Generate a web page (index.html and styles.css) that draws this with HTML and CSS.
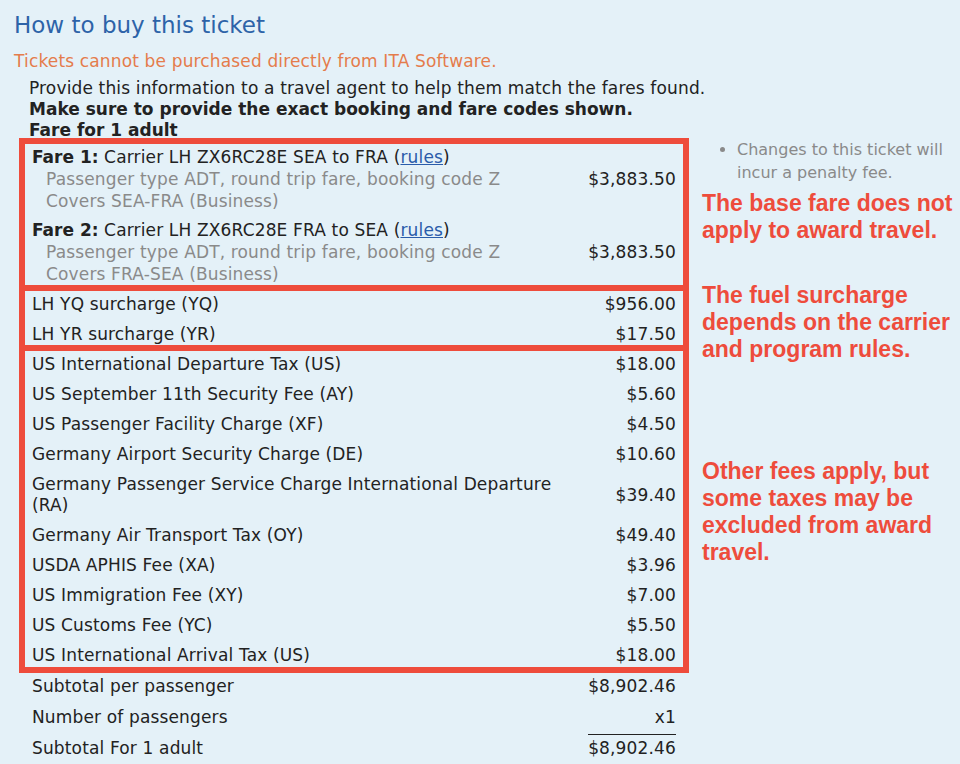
FILE: index.html
```html
<!DOCTYPE html>
<html lang="en">
<head>
    <meta charset="UTF-8">
    <meta name="viewport" content="width=device-width, initial-scale=1.0">
    <title>How to buy this ticket</title>
    <link rel="stylesheet" href="styles.css">
</head>
<body>
    <div class="page">
        <h1>How to buy this ticket</h1>
        <p class="notice">Tickets cannot be purchased directly from ITA Software.</p>
        <div class="intro">
            <p>Provide this information to a travel agent to help them match the fares found.</p>
            <p class="strong">Make sure to provide the exact booking and fare codes shown.</p>
            <p class="strong">Fare for 1 adult</p>
        </div>

        <div class="layout">
            <div class="fares">
                <div class="box box-fares">
                    <div class="fare">
                        <div class="fare-info">
                            <div><b>Fare 1:</b> Carrier LH ZX6RC28E SEA to FRA (<a href="#">rules</a>)</div>
                            <div class="sub">Passenger type ADT, round trip fare, booking code Z</div>
                            <div class="sub">Covers SEA-FRA (Business)</div>
                        </div>
                        <div class="amount">$3,883.50</div>
                    </div>
                    <div class="fare">
                        <div class="fare-info">
                            <div><b>Fare 2:</b> Carrier LH ZX6RC28E FRA to SEA (<a href="#">rules</a>)</div>
                            <div class="sub">Passenger type ADT, round trip fare, booking code Z</div>
                            <div class="sub">Covers FRA-SEA (Business)</div>
                        </div>
                        <div class="amount">$3,883.50</div>
                    </div>
                </div>

                <div class="box box-list">
                    <div class="row"><span class="label">LH YQ surcharge (YQ)</span><span class="amount">$956.00</span></div>
                    <div class="row"><span class="label">LH YR surcharge (YR)</span><span class="amount">$17.50</span></div>
                </div>

                <div class="box box-list box-last">
                    <div class="row"><span class="label">US International Departure Tax (US)</span><span class="amount">$18.00</span></div>
                    <div class="row"><span class="label">US September 11th Security Fee (AY)</span><span class="amount">$5.60</span></div>
                    <div class="row"><span class="label">US Passenger Facility Charge (XF)</span><span class="amount">$4.50</span></div>
                    <div class="row"><span class="label">Germany Airport Security Charge (DE)</span><span class="amount">$10.60</span></div>
                    <div class="row"><span class="label">Germany Passenger Service Charge International Departure (RA)</span><span class="amount">$39.40</span></div>
                    <div class="row"><span class="label">Germany Air Transport Tax (OY)</span><span class="amount">$49.40</span></div>
                    <div class="row"><span class="label">USDA APHIS Fee (XA)</span><span class="amount">$3.96</span></div>
                    <div class="row"><span class="label">US Immigration Fee (XY)</span><span class="amount">$7.00</span></div>
                    <div class="row"><span class="label">US Customs Fee (YC)</span><span class="amount">$5.50</span></div>
                    <div class="row"><span class="label">US International Arrival Tax (US)</span><span class="amount">$18.00</span></div>
                </div>

                <div class="totals">
                    <div class="row"><span class="label">Subtotal per passenger</span><span class="amount">$8,902.46</span></div>
                    <div class="row"><span class="label">Number of passengers</span><span class="amount">x1</span></div>
                    <div class="row"><span class="label">Subtotal For 1 adult</span><span class="amount total">$8,902.46</span></div>
                </div>
            </div>

            <div class="aside">
                <ul class="notes">
                    <li>Changes to this ticket will incur a penalty fee.</li>
                </ul>
                <p class="callout callout-base">The base fare does not apply to award travel.</p>
                <p class="callout callout-fuel">The fuel surcharge depends on the carrier and program rules.</p>
                <p class="callout callout-fees">Other fees apply, but some taxes may be excluded from award travel.</p>
            </div>
        </div>
    </div>
</body>
</html>
```

FILE: styles.css
```css
body {
    margin: 0;
    background-color: #e4f1f8;
    font-family: "DejaVu Sans", Verdana, sans-serif;
    font-size: 17px;
    letter-spacing: 0.15px;
    color: #222;
}

.page {
    padding-left: 14px;
}

h1 {
    margin: 10px 0 0;
    font-size: 23px;
    line-height: 30px;
    font-weight: normal;
    letter-spacing: 0;
    color: #2d63a8;
}

.notice {
    margin: 11px 0 0;
    line-height: 21px;
    color: #e47c4c;
}

.intro {
    margin: 6px 0 0 15px;
    line-height: 21px;
}

.intro p {
    margin: 0;
}

.strong {
    font-weight: bold;
    letter-spacing: 0;
}

b {
    letter-spacing: 0;
}

.layout {
    display: flex;
    margin-top: -3px;
}

.fares {
    width: 670px;
    margin-left: 5px;
}

/* rote Rahmen um die Gruppen */
.box {
    border: 6px solid #ee4c3c;
    padding: 3px 7px 0;
}

.box + .box {
    border-top: none;
}

.box-last {
    padding-bottom: 1px;
}

.box-fares {
    display: flex;
    flex-direction: column;
    gap: 7px;
    line-height: 22px;
    padding-top: 2px;
}

.fare {
    display: flex;
    justify-content: space-between;
    align-items: center;
}

.sub {
    padding-left: 14px;
    color: #8a8a8a;
}

a {
    color: #2a5caa;
}

.box-list,
.totals {
    display: flex;
    flex-direction: column;
    gap: 9px;
    line-height: 21px;
}

.row {
    display: flex;
    justify-content: space-between;
    align-items: center;
}

.label {
    max-width: 535px;
}

.amount {
    white-space: nowrap;
}

.totals {
    gap: 10px;
    padding: 3px 13px 0;
}

.total {
    border-top: 1px solid #222;
    margin-top: -4px;
    padding-top: 3px;
}

.aside {
    width: 258px;
    margin-left: 13px;
}

.notes {
    margin: 0;
    padding-left: 35px;
    font-size: 16px;
    line-height: 23px;
    letter-spacing: 0;
    color: #8a8a8a;
}

.callout {
    margin: 0;
    font-family: "Liberation Sans", Arial, sans-serif;
    font-weight: bold;
    font-size: 23px;
    line-height: 27px;
    letter-spacing: 0;
    color: #ee4c3c;
}

.callout-base {
    margin-top: 6px;
}

.callout-fuel {
    margin-top: 38px;
}

.callout-fees {
    margin-top: 95px;
}
```
